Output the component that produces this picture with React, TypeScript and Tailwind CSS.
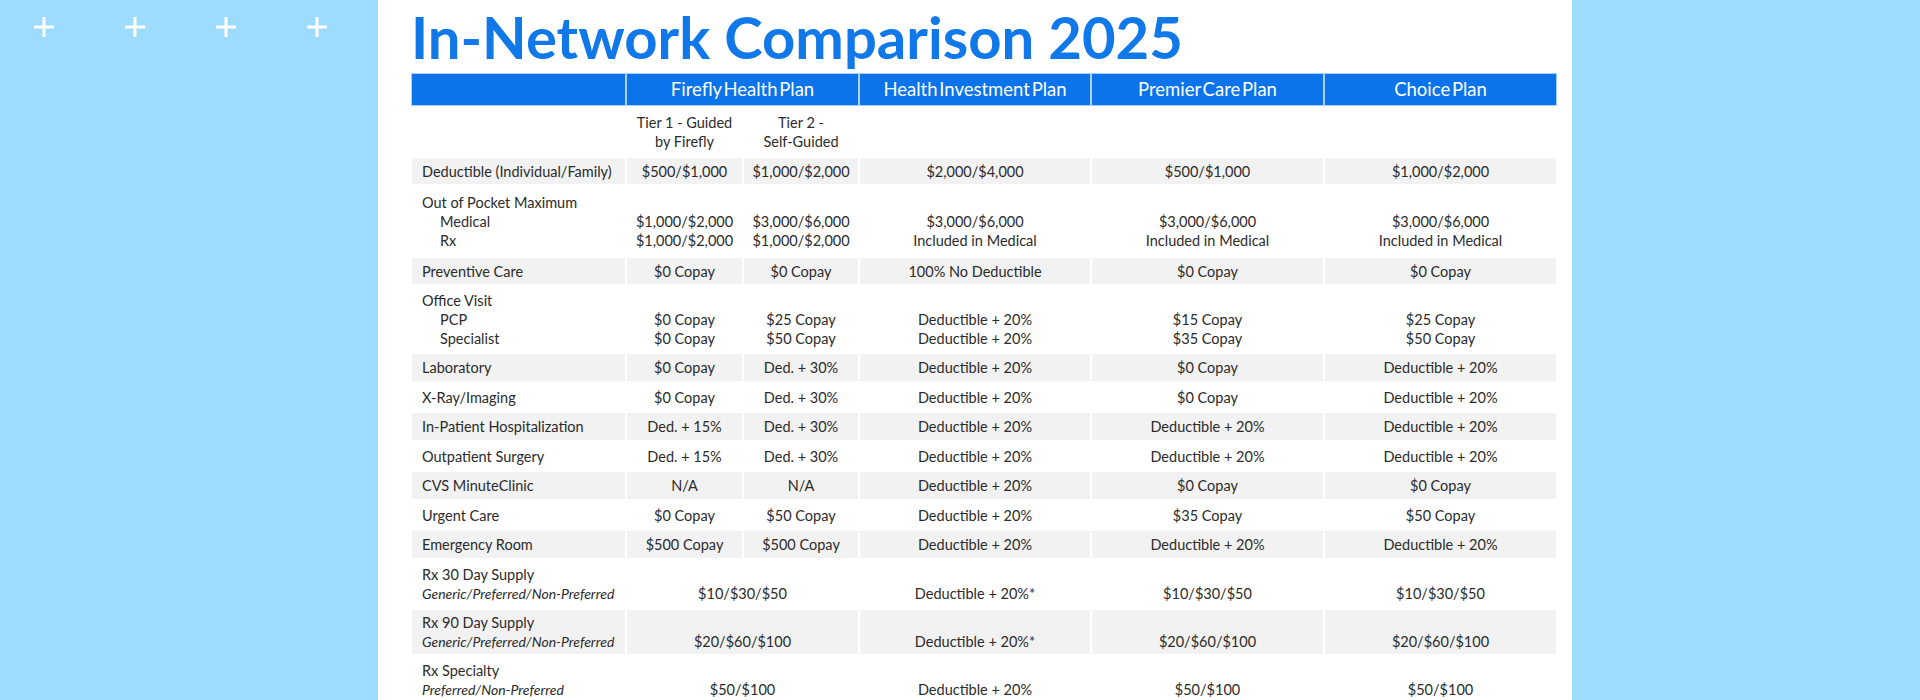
import React from "react";

type Line = { t: string; indent?: boolean; italic?: boolean };
type Cell = { lines: string[]; span?: number };
type Row = { label: Line[]; gray: boolean; h: string; cells: Cell[] };

const c = (...lines: string[]): Cell => ({ lines });
const s = (...lines: string[]): Cell => ({ lines, span: 2 });

const rows: Row[] = [
  {
    label: [{ t: "Deductible (Individual/Family)" }],
    gray: true,
    h: "h-[28px]",
    cells: [c("$500/$1,000"), c("$1,000/$2,000"), c("$2,000/$4,000"), c("$500/$1,000"), c("$1,000/$2,000")],
  },
  {
    label: [{ t: "Out of Pocket Maximum" }, { t: "Medical", indent: true }, { t: "Rx", indent: true }],
    gray: false,
    h: "h-[72px]",
    cells: [
      c("", "$1,000/$2,000", "$1,000/$2,000"),
      c("", "$3,000/$6,000", "$1,000/$2,000"),
      c("", "$3,000/$6,000", "Included in Medical"),
      c("", "$3,000/$6,000", "Included in Medical"),
      c("", "$3,000/$6,000", "Included in Medical"),
    ],
  },
  {
    label: [{ t: "Preventive Care" }],
    gray: true,
    h: "h-[28px]",
    cells: [c("$0 Copay"), c("$0 Copay"), c("100% No Deductible"), c("$0 Copay"), c("$0 Copay")],
  },
  {
    label: [{ t: "Office Visit" }, { t: "PCP", indent: true }, { t: "Specialist", indent: true }],
    gray: false,
    h: "h-[68px]",
    cells: [
      c("", "$0 Copay", "$0 Copay"),
      c("", "$25 Copay", "$50 Copay"),
      c("", "Deductible + 20%", "Deductible + 20%"),
      c("", "$15 Copay", "$35 Copay"),
      c("", "$25 Copay", "$50 Copay"),
    ],
  },
  {
    label: [{ t: "Laboratory" }],
    gray: true,
    h: "h-[29px]",
    cells: [c("$0 Copay"), c("Ded. + 30%"), c("Deductible + 20%"), c("$0 Copay"), c("Deductible + 20%")],
  },
  {
    label: [{ t: "X-Ray/Imaging" }],
    gray: false,
    h: "h-[30px]",
    cells: [c("$0 Copay"), c("Ded. + 30%"), c("Deductible + 20%"), c("$0 Copay"), c("Deductible + 20%")],
  },
  {
    label: [{ t: "In-Patient Hospitalization" }],
    gray: true,
    h: "h-[29px]",
    cells: [c("Ded. + 15%"), c("Ded. + 30%"), c("Deductible + 20%"), c("Deductible + 20%"), c("Deductible + 20%")],
  },
  {
    label: [{ t: "Outpatient Surgery" }],
    gray: false,
    h: "h-[30px]",
    cells: [c("Ded. + 15%"), c("Ded. + 30%"), c("Deductible + 20%"), c("Deductible + 20%"), c("Deductible + 20%")],
  },
  {
    label: [{ t: "CVS MinuteClinic" }],
    gray: true,
    h: "h-[29px]",
    cells: [c("N/A"), c("N/A"), c("Deductible + 20%"), c("$0 Copay"), c("$0 Copay")],
  },
  {
    label: [{ t: "Urgent Care" }],
    gray: false,
    h: "h-[30px]",
    cells: [c("$0 Copay"), c("$50 Copay"), c("Deductible + 20%"), c("$35 Copay"), c("$50 Copay")],
  },
  {
    label: [{ t: "Emergency Room" }],
    gray: true,
    h: "h-[29px]",
    cells: [c("$500 Copay"), c("$500 Copay"), c("Deductible + 20%"), c("Deductible + 20%"), c("Deductible + 20%")],
  },
  {
    label: [{ t: "Rx 30 Day Supply" }, { t: "Generic/Preferred/Non-Preferred", italic: true }],
    gray: false,
    h: "h-[50px]",
    cells: [s("", "$10/$30/$50"), c("", "Deductible + 20%*"), c("", "$10/$30/$50"), c("", "$10/$30/$50")],
  },
  {
    label: [{ t: "Rx 90 Day Supply" }, { t: "Generic/Preferred/Non-Preferred", italic: true }],
    gray: true,
    h: "h-[46px]",
    cells: [s("", "$20/$60/$100"), c("", "Deductible + 20%*"), c("", "$20/$60/$100"), c("", "$20/$60/$100")],
  },
  {
    label: [{ t: "Rx Specialty" }, { t: "Preferred/Non-Preferred", italic: true }],
    gray: false,
    h: "h-[50px]",
    cells: [s("", "$50/$100"), c("", "Deductible + 20%"), c("", "$50/$100"), c("", "$50/$100")],
  },
];

function Plus() {
  return (
    <svg width="22" height="22" viewBox="0 0 22 22" className="block">
      <line x1="11" y1="1" x2="11" y2="21" stroke="white" strokeWidth="3" />
      <line x1="1" y1="11" x2="21" y2="11" stroke="white" strokeWidth="3" />
    </svg>
  );
}

const font = { fontFamily: "Lato, 'Open Sans', sans-serif" } as React.CSSProperties;

export default function App() {
  return (
    <div className="w-[1920px] h-[700px] overflow-hidden bg-[#9edcfd] flex" style={font}>
      <div className="w-[378px] shrink-0 flex items-start gap-[69px] pl-[33px] pt-[16px]">
        <Plus />
        <Plus />
        <Plus />
        <Plus />
      </div>
      <div className="w-[1194px] shrink-0 bg-white pl-[33px] pr-[15px]">
        <h1 className="pt-[9px] h-[73px] text-[58px] leading-[56px] font-bold text-[#1178ea] tracking-[0px] whitespace-nowrap">
          In-Network Comparison 2025
        </h1>
        <div className="grid grid-cols-[215px_117px_116px_232px_233px_233px] text-[14.5px] text-[#2b2b2b]">
          {/* header */}
          <div className="h-[33px] bg-[#0b74ea] border border-[#a9d0f8]" />
          {["Firefly Health Plan", "Health Investment Plan", "Premier Care Plan", "Choice Plan"].map((h, i) => (
            <div
              key={h}
              className={`h-[33px] bg-[#0b74ea] border border-[#a9d0f8] flex items-center justify-center text-white text-[18.5px] [word-spacing:-3px] ${
                i === 0 ? "col-span-2" : ""
              }`}
            >
              {h}
            </div>
          ))}
          {/* subheader */}
          <div className="h-[51px]" />
          <div className="h-[51px] flex flex-col items-center justify-center leading-[19px] text-center">
            <span>Tier 1 - Guided</span>
            <span>by Firefly</span>
          </div>
          <div className="h-[51px] flex flex-col items-center justify-center leading-[19px] text-center">
            <span>Tier 2 -</span>
            <span>Self-Guided</span>
          </div>
          <div className="h-[51px]" />
          <div className="h-[51px]" />
          <div className="h-[51px]" />
          {rows.map((r, ri) => (
            <React.Fragment key={ri}>
              <div
                className={`${r.h} ${r.gray ? "bg-[#f2f2f2]" : ""} border border-white pl-[10px] flex flex-col justify-center leading-[19px] whitespace-nowrap`}
              >
                {r.label.map((l, li) => (
                  <span key={li} className={`${l.indent ? "pl-[18px]" : ""} ${l.italic ? "italic text-[14px]" : ""}`}>
                    {l.t}
                  </span>
                ))}
              </div>
              {r.cells.map((cell, ci) => (
                <div
                  key={ci}
                  className={`${r.h} ${r.gray ? "bg-[#f2f2f2]" : ""} ${
                    cell.span === 2 ? "col-span-2" : ""
                  } border border-white flex flex-col items-center justify-center leading-[19px] whitespace-nowrap`}
                >
                  {cell.lines.map((t, ti) => (
                    <span key={ti} className="h-[19px]">
                      {t}
                    </span>
                  ))}
                </div>
              ))}
            </React.Fragment>
          ))}
        </div>
      </div>
      <div className="flex-1" />
    </div>
  );
}
